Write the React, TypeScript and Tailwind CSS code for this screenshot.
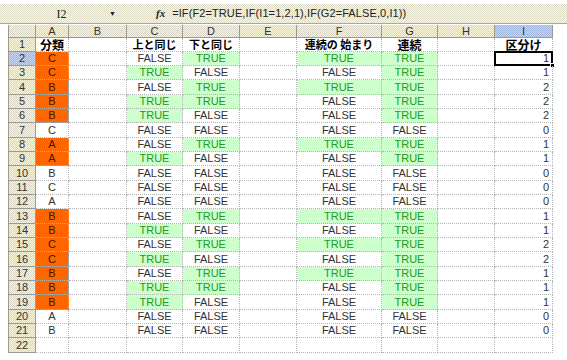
import React from 'react';

const colWidths = ['w-[28px]', 'w-[33px]', 'w-[58px]', 'w-[56px]', 'w-[57px]', 'w-[57px]', 'w-[85px]', 'w-[56px]', 'w-[57px]', 'w-[58px]'];
const colNames = ['', 'A', 'B', 'C', 'D', 'E', 'F', 'G', 'H', 'I'];

// row: 分類, orange?, C, D, F, G, I  (T = TRUE, F = FALSE)
const raw: [string, number, string, number][] = [
  ['C', 1, 'FTTT', 1],
  ['C', 1, 'TFFT', 1],
  ['B', 1, 'FTTT', 2],
  ['B', 1, 'TTFT', 2],
  ['B', 1, 'TFFT', 2],
  ['C', 0, 'FFFF', 0],
  ['A', 1, 'FTTT', 1],
  ['A', 1, 'TFFT', 1],
  ['B', 0, 'FFFF', 0],
  ['C', 0, 'FFFF', 0],
  ['A', 0, 'FFFF', 0],
  ['B', 1, 'FTTT', 1],
  ['B', 1, 'TFFT', 1],
  ['C', 1, 'FTTT', 2],
  ['C', 1, 'TFFT', 2],
  ['B', 1, 'FTTT', 1],
  ['B', 1, 'TTFT', 1],
  ['B', 1, 'TFFT', 1],
  ['A', 0, 'FFFF', 0],
  ['B', 0, 'FFFF', 0],
];

const dither = 'bg-[repeating-conic-gradient(#fbf8dc_0_25%,#d6d3c4_0_50%)] bg-[length:2px_2px]';
const ditherSel = 'bg-[repeating-conic-gradient(#c8d8f4_0_25%,#9fb4dc_0_50%)] bg-[length:2px_2px]';
const ditherTop = 'bg-[repeating-conic-gradient(#fcf9e0_0_25%,#dedbc6_0_50%)] bg-[length:2px_2px]';
const cellBorder = 'border-r border-b border-dotted border-[#b4b4b4]';

function BoolCell({ v, w }: { v: boolean; w: string }) {
  return v ? (
    <div className={`${w} ${cellBorder} bg-[#ccffcc] text-[#239a23] flex items-center justify-center`}>TRUE</div>
  ) : (
    <div className={`${w} ${cellBorder} text-[#333] flex items-center justify-center`}>FALSE</div>
  );
}

function rowHeight(n: number) {
  if (n === 1) return 'h-[14px]';
  return (n - 2) % 3 === 2 ? 'h-[15px]' : 'h-[14px]';
}

export default function App() {
  return (
    <div className="w-[567px] h-[360px] bg-white overflow-hidden font-['Liberation_Sans',sans-serif] text-[11px] leading-none">
      {/* formula bar */}
      <div className="h-[25px] pt-[4px] bg-white">
        <div className={`h-[20px] ${ditherTop} border-b border-[#a8a8a0] flex items-center pl-[8px] text-[#222]`}>
          <div className="w-[112px] flex items-center">
            <span className="flex-1 text-center font-['Liberation_Serif',serif] text-[12px] pl-[6px]">I2</span>
            <span className="text-[7px] mr-[4px]">▼</span>
          </div>
          <span className="ml-[36px] italic font-['Liberation_Serif',serif] text-[11px] font-bold">fx</span>
          <span className="ml-[7px] tracking-[0.1px]">=IF(F2=TRUE,IF(I1=1,2,1),IF(G2=FALSE,0,I1))</span>
        </div>
      </div>

      <div className="ml-[8px] flex flex-col">
        {/* column headers */}
        <div className="flex h-[13px]">
          {colNames.map((c, i) => (
            <div
              key={i}
              className={`${colWidths[i]} ${c === 'I' ? ditherSel : dither} border-r border-b border-[#9c9a8c] flex items-center justify-center text-[#333] ${i === 0 ? 'border-l' : ''}`}
            >
              {c}
            </div>
          ))}
        </div>

        {/* row 1 */}
        <div className={`flex ${rowHeight(1)} font-['Noto_Sans_CJK_JP',sans-serif] font-bold text-[12px] text-black`}>
          <div className={`${colWidths[0]} ${dither} border-l border-r border-b border-[#9c9a8c] flex items-center justify-center font-['Liberation_Sans',sans-serif] font-normal text-[11px] text-[#333]`}>1</div>
          <div className={`${colWidths[1]} ${cellBorder} flex items-center justify-center`}>分類</div>
          <div className={`${colWidths[2]} ${cellBorder}`} />
          <div className={`${colWidths[3]} ${cellBorder} flex items-center justify-center text-[11px]`}>上と同じ</div>
          <div className={`${colWidths[4]} ${cellBorder} flex items-center justify-center text-[11px]`}>下と同じ</div>
          <div className={`${colWidths[5]} ${cellBorder}`} />
          <div className={`${colWidths[6]} ${cellBorder} flex items-center justify-center text-[11px]`}>連続の 始まり</div>
          <div className={`${colWidths[7]} ${cellBorder} flex items-center justify-center`}>連続</div>
          <div className={`${colWidths[8]} ${cellBorder}`} />
          <div className={`${colWidths[9]} ${cellBorder} flex items-center justify-center`}>区分け</div>
        </div>

        {raw.map(([cat, orange, flags, part], idx) => {
          const n = idx + 2;
          return (
            <div key={n} className={`flex ${rowHeight(n)}`}>
              <div className={`${colWidths[0]} ${n === 2 ? ditherSel : dither} border-l border-r border-b border-[#9c9a8c] flex items-center justify-center text-[#333]`}>{n}</div>
              <div className={`${colWidths[1]} ${cellBorder} ${orange ? 'bg-[#ff6600] text-[#3a1a00]' : 'text-[#333]'} flex items-center justify-center`}>{cat}</div>
              <div className={`${colWidths[2]} ${cellBorder}`} />
              <BoolCell v={flags[0] === 'T'} w={colWidths[3]} />
              <BoolCell v={flags[1] === 'T'} w={colWidths[4]} />
              <div className={`${colWidths[5]} ${cellBorder}`} />
              <BoolCell v={flags[2] === 'T'} w={colWidths[6]} />
              <BoolCell v={flags[3] === 'T'} w={colWidths[7]} />
              <div className={`${colWidths[8]} ${cellBorder}`} />
              <div className={`${colWidths[9]} ${cellBorder} relative flex items-center justify-end pr-[3px] text-[#333]`}>
                {part}
                {n === 2 && (
                  <>
                    <div className="absolute -left-[1px] -top-[1px] -right-[1px] -bottom-[1px] border-2 border-black" />
                    <div className="absolute -right-[3px] -bottom-[3px] w-[5px] h-[5px] bg-black border border-white" />
                  </>
                )}
              </div>
            </div>
          );
        })}

        {/* row 22 */}
        <div className="flex h-[15px]">
          <div className={`${colWidths[0]} ${dither} border-l border-r border-b border-[#9c9a8c] flex items-center justify-center text-[#333]`}>22</div>
          {colWidths.slice(1).map((w, i) => (
            <div key={i} className={`${w} ${cellBorder}`} />
          ))}
        </div>
      </div>
    </div>
  );
}
